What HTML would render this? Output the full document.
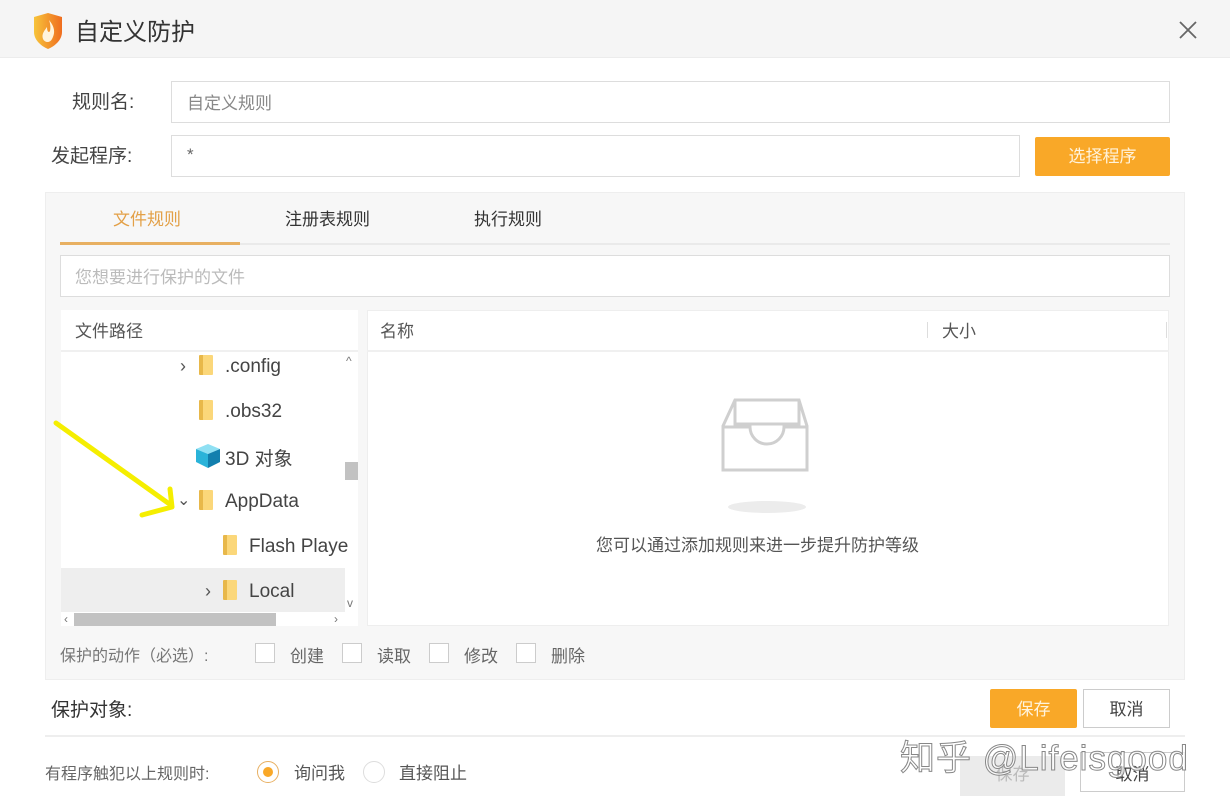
<!DOCTYPE html>
<html><head><meta charset="utf-8"><style>
*{margin:0;padding:0;box-sizing:border-box}
body{width:1230px;height:810px;background:#fff;position:relative;overflow:hidden;font-family:"Liberation Sans","Noto Sans CJK SC",sans-serif;color:#333}
.a{position:absolute}
.t{position:absolute;white-space:nowrap;margin-top:-3px}
.l{margin-top:2px}
.inp{position:absolute;background:#fff;border:1px solid #ddd}
.fold{position:absolute;width:14px;height:20px;background:linear-gradient(90deg,#e8b84a 0 30%,#fbd77a 30%);border-radius:1px}
.cb{position:absolute;width:20px;height:20px;border:1px solid #ccc;background:#fff}
</style></head><body>
<div class="a" style="left:0;top:0;width:1230px;height:58px;background:#f5f5f5;border-bottom:1px solid #ececec"></div>
<svg class="a" style="left:32px;top:12px" width="32" height="38" viewBox="0 0 32 38">
<defs><linearGradient id="g" x1="0" x2="1"><stop offset="0" stop-color="#f7c43a"/><stop offset="1" stop-color="#ef6d1f"/></linearGradient></defs>
<path d="M2 5 L16 1 L30 5 L30 20 C30 28 23 34 16 37 C9 34 2 28 2 20 Z" fill="url(#g)"/>
<path d="M17 8 C22 14 24 20 20 27 C18 31 13 31 11 27 C9 22 13 18 15 15 C15 20 17 21 18 19 C19 15 18 11 17 8Z" fill="#fff3dc"/>
</svg>
<div class="t" style="left:75px;top:15px;font-size:24px;color:#333">自定义防护</div>
<svg class="a" style="left:1178px;top:20px" width="20" height="20"><path d="M2 2L18 18M18 2L2 18" stroke="#666" stroke-width="1.8"/></svg>

<div class="t" style="left:72px;top:90px;font-size:19px;color:#444">规则名:</div>
<div class="inp" style="left:171px;top:81px;width:999px;height:42px"></div>
<div class="t" style="left:187px;top:92px;font-size:17px;color:#888">自定义规则</div>
<div class="t" style="left:51px;top:144px;font-size:19px;color:#444">发起程序:</div>
<div class="inp" style="left:171px;top:135px;width:849px;height:42px"></div>
<div class="t" style="left:187px;top:148px;font-size:17px;color:#666">*</div>
<div class="a" style="left:1035px;top:137px;width:135px;height:39px;background:#f9a828;border-radius:2px"></div>
<div class="t" style="left:1035px;top:145px;width:135px;text-align:center;font-size:17px;color:#fff3dc">选择程序</div>

<div class="a" style="left:45px;top:192px;width:1140px;height:488px;background:#f7f7f7;border:1px solid #eee"></div>
<div class="a" style="left:60px;top:243px;width:1110px;height:2px;background:#eaeaea"></div>
<div class="a" style="left:60px;top:242px;width:180px;height:3px;background:#e8b062"></div>
<div class="t" style="left:113px;top:208px;font-size:17px;color:#e3a047">文件规则</div>
<div class="t" style="left:285px;top:208px;font-size:17px;color:#333">注册表规则</div>
<div class="t" style="left:474px;top:208px;font-size:17px;color:#333">执行规则</div>
<div class="inp" style="left:60px;top:255px;width:1110px;height:42px"></div>
<div class="t" style="left:75px;top:266px;font-size:17px;color:#bbb">您想要进行保护的文件</div>

<div class="a" style="left:61px;top:310px;width:297px;height:316px;background:#fff"></div>
<div class="a" style="left:61px;top:350px;width:297px;height:2px;background:#f0f0f0"></div>
<div class="t" style="left:75px;top:320px;font-size:17px;color:#555">文件路径</div>
<div class="a" style="left:61px;top:568px;width:284px;height:44px;background:#eeeeee"></div>
<div class="t l" style="left:180px;top:354px;font-size:18px;color:#555">›</div>
<div class="fold" style="left:199px;top:355px"></div><div class="t l" style="left:225px;top:354px;font-size:19px;color:#444">.config</div>
<div class="fold" style="left:199px;top:400px"></div><div class="t l" style="left:225px;top:399px;font-size:19px;color:#444">.obs32</div>
<svg class="a" style="left:195px;top:443px" width="26" height="26" viewBox="0 0 26 26"><path d="M13 1L25 6L13 11L1 6Z" fill="#8fe0f3"/><path d="M1 6L13 11L13 25L1 19Z" fill="#2ab3d9"/><path d="M25 6L13 11L13 25L25 19Z" fill="#127fae"/></svg>
<div class="t" style="left:225px;top:447px;font-size:19px;color:#444">3D 对象</div>
<div class="t l" style="left:177px;top:488px;font-size:16px;color:#555">⌄</div>
<div class="fold" style="left:199px;top:490px"></div><div class="t l" style="left:225px;top:489px;font-size:19px;color:#444">AppData</div>
<div class="fold" style="left:223px;top:535px"></div><div class="t l" style="left:249px;top:534px;font-size:19px;color:#444">Flash Playe</div>
<div class="t l" style="left:205px;top:579px;font-size:18px;color:#555">›</div>
<div class="fold" style="left:223px;top:580px"></div><div class="t l" style="left:249px;top:579px;font-size:19px;color:#444">Local</div>
<div class="t l" style="left:346px;top:352px;font-size:12px;color:#777">^</div>
<div class="a" style="left:345px;top:462px;width:13px;height:18px;background:#c2c2c2"></div>
<div class="t l" style="left:347px;top:594px;font-size:12px;color:#777">v</div>
<div class="a" style="left:74px;top:613px;width:202px;height:13px;background:#c2c2c2"></div>
<div class="t l" style="left:64px;top:610px;font-size:12px;color:#777">‹</div>
<div class="t l" style="left:334px;top:610px;font-size:12px;color:#777">›</div>
<svg class="a" style="left:50px;top:415px" width="130" height="110"><path d="M6 8 L118 88 M120 74 L122 92 L92 100" stroke="#f5ee00" stroke-width="5" fill="none" stroke-linecap="round" stroke-linejoin="round"/></svg>

<div class="a" style="left:367px;top:310px;width:802px;height:316px;background:#fff;border:1px solid #eee"></div>
<div class="a" style="left:367px;top:350px;width:802px;height:2px;background:#f0f0f0"></div>
<div class="t" style="left:380px;top:320px;font-size:17px;color:#555">名称</div>
<div class="a" style="left:927px;top:322px;width:1px;height:16px;background:#ddd"></div>
<div class="t" style="left:942px;top:320px;font-size:17px;color:#555">大小</div>
<div class="a" style="left:1166px;top:322px;width:1px;height:16px;background:#ddd"></div>
<svg class="a" style="left:720px;top:397px" width="94" height="76" viewBox="0 0 94 76"><g fill="none" stroke="#cfcfcf" stroke-width="3"><path d="M15 3H79L87 29V73H3V29Z"/><path d="M15 3V30M79 3V30"/><path d="M15 27H79"/><path d="M3 30H30A17 17 0 0 0 64 30H87"/></g></svg>
<div class="a" style="left:728px;top:501px;width:78px;height:12px;border-radius:50%;background:#ececec"></div>
<div class="t" style="left:596px;top:534px;font-size:17px;color:#555">您可以通过添加规则来进一步提升防护等级</div>

<div class="t" style="left:60px;top:645px;font-size:16px;color:#777">保护的动作（必选）:</div>
<div class="cb" style="left:255px;top:643px"></div><div class="t" style="left:290px;top:645px;font-size:17px;color:#666">创建</div>
<div class="cb" style="left:342px;top:643px"></div><div class="t" style="left:377px;top:645px;font-size:17px;color:#666">读取</div>
<div class="cb" style="left:429px;top:643px"></div><div class="t" style="left:464px;top:645px;font-size:17px;color:#666">修改</div>
<div class="cb" style="left:516px;top:643px"></div><div class="t" style="left:551px;top:645px;font-size:17px;color:#666">删除</div>

<div class="t" style="left:51px;top:698px;font-size:19px;color:#333">保护对象:</div>
<div class="a" style="left:990px;top:689px;width:87px;height:39px;background:#f9a828;border-radius:2px"></div>
<div class="t" style="left:990px;top:698px;width:87px;text-align:center;font-size:17px;color:#fff3dc">保存</div>
<div class="a" style="left:1083px;top:689px;width:87px;height:39px;background:#fff;border:1px solid #ccc"></div>
<div class="t" style="left:1083px;top:698px;width:87px;text-align:center;font-size:17px;color:#444">取消</div>
<div class="a" style="left:45px;top:735px;width:1140px;height:2px;background:#eee"></div>

<div class="t" style="left:45px;top:763px;font-size:16px;color:#666">有程序触犯以上规则时:</div>
<div class="a" style="left:257px;top:761px;width:22px;height:22px;border-radius:50%;border:1px solid #e8b062;background:#fff"></div>
<div class="a" style="left:263px;top:767px;width:10px;height:10px;border-radius:50%;background:#f9a828"></div>
<div class="t" style="left:294px;top:762px;font-size:17px;color:#555">询问我</div>
<div class="a" style="left:363px;top:761px;width:22px;height:22px;border-radius:50%;border:1px solid #ddd;background:#fff"></div>
<div class="t" style="left:399px;top:762px;font-size:17px;color:#555">直接阻止</div>
<div class="a" style="left:960px;top:756px;width:105px;height:40px;background:#ebebeb"></div>
<div class="t" style="left:960px;top:763px;width:105px;text-align:center;font-size:17px;color:#bbb">保存</div>
<div class="a" style="left:1080px;top:752px;width:105px;height:40px;background:#fff;border:1px solid #ccc"></div>
<div class="t" style="left:1080px;top:763px;width:105px;text-align:center;font-size:17px;color:#444">取消</div>
<div class="t" style="left:900px;top:733px;font-size:35px;color:rgba(255,255,255,0.75);-webkit-text-stroke:1px #888;letter-spacing:1px">知乎 @Lifeisgood</div>
</body></html>
